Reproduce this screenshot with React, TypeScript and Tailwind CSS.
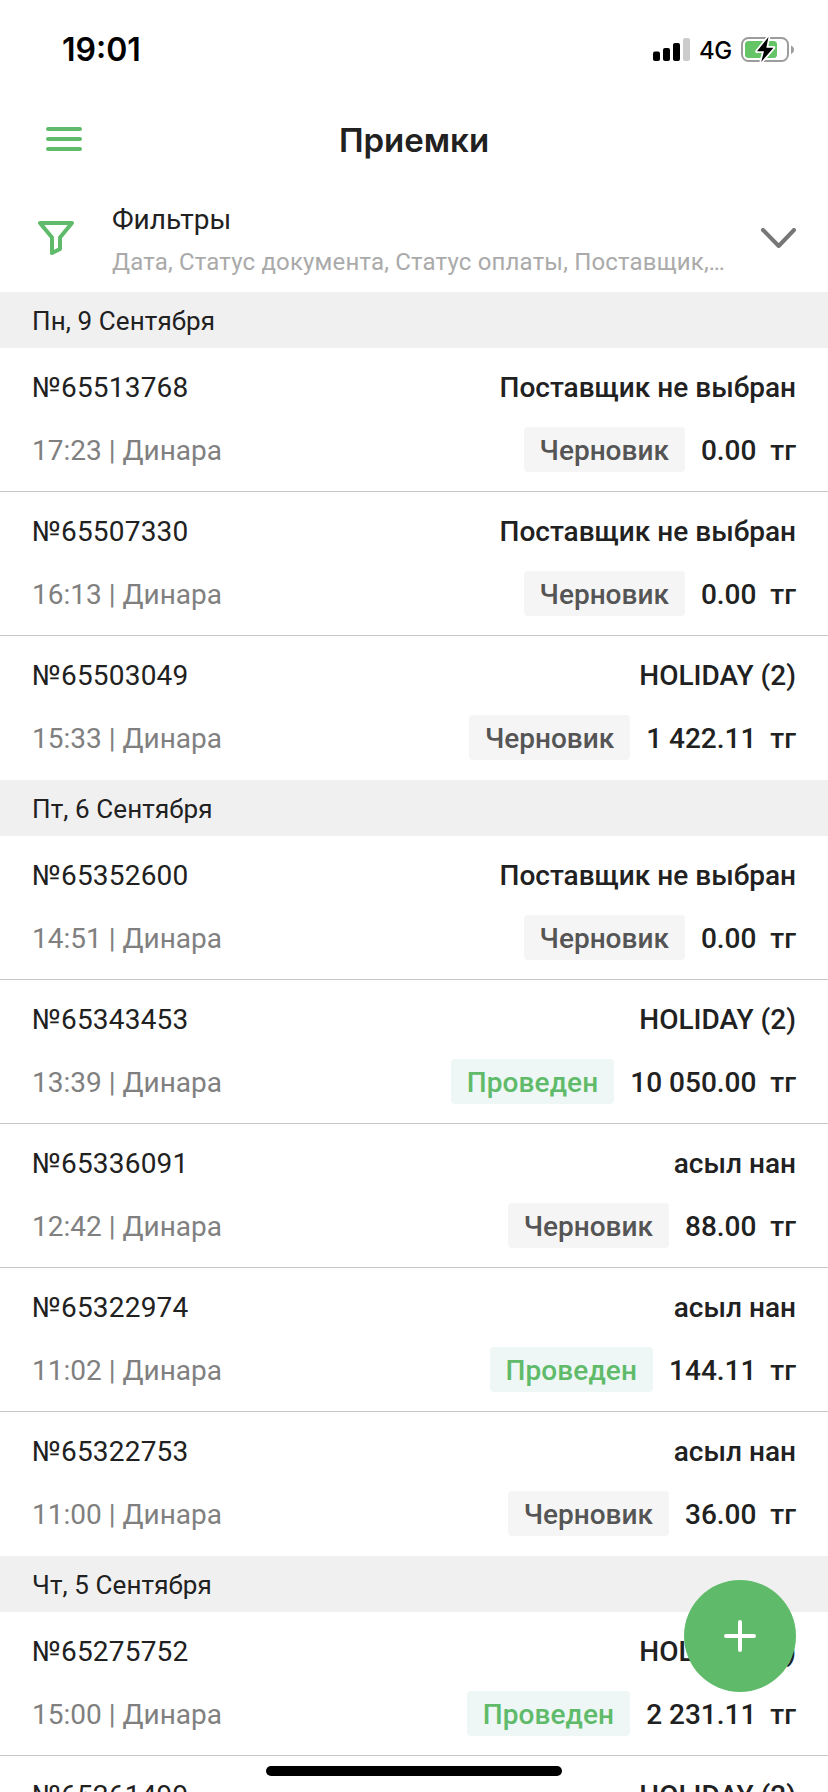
import clsx from 'clsx'

type Status = 'draft' | 'done'

interface Receipt {
  id: string
  time: string
  supplier: string
  status: Status
  amount: string
}

const sections: { date: string; items: Receipt[] }[] = [
  {
    date: 'Пн, 9 Сентября',
    items: [
      { id: '65513768', time: '17:23', supplier: 'Поставщик не выбран', status: 'draft', amount: '0.00' },
      { id: '65507330', time: '16:13', supplier: 'Поставщик не выбран', status: 'draft', amount: '0.00' },
      { id: '65503049', time: '15:33', supplier: 'HOLIDAY (2)', status: 'draft', amount: '1 422.11' },
    ],
  },
  {
    date: 'Пт, 6 Сентября',
    items: [
      { id: '65352600', time: '14:51', supplier: 'Поставщик не выбран', status: 'draft', amount: '0.00' },
      { id: '65343453', time: '13:39', supplier: 'HOLIDAY (2)', status: 'done', amount: '10 050.00' },
      { id: '65336091', time: '12:42', supplier: 'асыл нан', status: 'draft', amount: '88.00' },
      { id: '65322974', time: '11:02', supplier: 'асыл нан', status: 'done', amount: '144.11' },
      { id: '65322753', time: '11:00', supplier: 'асыл нан', status: 'draft', amount: '36.00' },
    ],
  },
  {
    date: 'Чт, 5 Сентября',
    items: [
      { id: '65275752', time: '15:00', supplier: 'HOLIDAY (2)', status: 'done', amount: '2 231.11' },
      { id: '65261499', time: '14:20', supplier: 'HOLIDAY (2)', status: 'done', amount: '1 150.00' },
    ],
  },
]

function StatusBar() {
  return (
    <div className="flex h-[100px] items-center justify-between pr-[33px] pl-[62px] font-['Inter',sans-serif] text-black">
      <span className="text-[32px] leading-10 font-semibold">19:01</span>
      <div className="flex items-center">
        <svg width="38" height="24" viewBox="0 0 38 24">
          <rect x="0" y="13.5" width="7" height="9.5" rx="2" />
          <rect x="10" y="10" width="7" height="13" rx="2" />
          <rect x="20" y="5" width="7" height="18" rx="2" />
          <rect x="30" y="0" width="7" height="23" rx="2" fill="#cccccc" />
        </svg>
        <span className="ml-2 w-[34px] pt-0.5 text-[24px] leading-8 font-medium tracking-[-0.6px] whitespace-nowrap">
          4G
        </span>
        <svg className="ml-2" width="54" height="28" viewBox="0 0 54 28">
          <rect x="1" y="2" width="46" height="23" rx="6.5" fill="none" stroke="#9c9c9c" strokeWidth="2" />
          <path d="M50 9.5c1.8.8 3 2.3 3 4.2s-1.2 3.4-3 4.2z" fill="#9c9c9c" />
          <rect x="4" y="5" width="32" height="17" rx="3.5" fill="#65c466" />
          <path
            d="M27.5 1 16 15.3h7L20.2 26 32.500 11.7h-7.2z"
            stroke="#ffffff"
            strokeWidth="3.5"
            strokeLinejoin="round"
            paintOrder="stroke"
          />
        </svg>
      </div>
    </div>
  )
}

function Header() {
  return (
    <header className="grid h-20 grid-cols-[1fr_auto_1fr] items-center px-[46px]">
      <svg
        className="mb-0.5"
        width="36"
        height="24"
        viewBox="0 0 36 24"
        stroke="#5fbb6a"
        strokeWidth="4"
        strokeLinecap="round"
      >
        <path d="M2 2h32M2 12h32M2 22h32" />
      </svg>
      <h1 className="font-['Inter',sans-serif] text-[33px] leading-10 font-semibold">Приемки</h1>
    </header>
  )
}

function Filters() {
  return (
    <div className="flex h-28 items-center pt-1 pr-8 pl-[38px]">
      <svg
        className="shrink-0"
        width="36"
        height="34"
        viewBox="0 0 36 34"
        fill="none"
        stroke="#5fbb6a"
        strokeWidth="4"
        strokeLinejoin="round"
      >
        <path d="M2 2h32L22 16.5V28l-8 4V16.5z" />
      </svg>
      <div className="ml-[38px] pt-1.5">
        <div className="text-[28px] leading-10">Фильтры</div>
        <div className="mt-0.5 text-[24px] leading-10 tracking-[0.17px] whitespace-nowrap text-[#aaaaaa]">
          Дата, Статус документа, Статус оплаты, Поставщик,<span className="tracking-[-1.4px]">...</span>
        </div>
      </div>
      <svg
        className="ml-auto shrink-0"
        width="36"
        height="20"
        viewBox="0 0 36 20"
        fill="none"
        stroke="#777777"
        strokeWidth="4"
        strokeLinecap="round"
        strokeLinejoin="round"
      >
        <path d="m3 2 15.7 16L34 2" />
      </svg>
    </div>
  )
}

function ReceiptRow({ item }: { item: Receipt }) {
  return (
    <li className="flex h-36 shrink-0 flex-col gap-5 border-b border-[#c7c7c7] px-8 pt-5 text-[28px] last:border-b-0">
      <div className="flex justify-between leading-[39px]">
        <span className="tracking-[0.2px]">№{item.id}</span>
        <span className="font-medium">{item.supplier}</span>
      </div>
      <div className="flex h-[45px] items-start leading-[47px]">
        <span className="text-[#808080]">{item.time} | Динара</span>
        <span
          className={clsx(
            'ml-auto h-[45px] rounded px-4 font-medium',
            item.status === 'done' ? 'bg-[#eef7f6] tracking-[0.1px] text-[#5fbb6a]' : 'bg-[#f5f5f5] text-[#555555]'
          )}
        >
          {item.status === 'done' ? 'Проведен' : 'Черновик'}
        </span>
        <span className="ml-4 font-medium whitespace-pre">{item.amount}  тг</span>
      </div>
    </li>
  )
}

export default function App() {
  return (
    <div className="relative flex h-[1792px] w-[828px] flex-col overflow-hidden bg-white font-['Roboto',sans-serif] text-[#212121]">
      <StatusBar />
      <Header />
      <Filters />

      <main className="flex-1 overflow-hidden">
        {sections.map((section) => (
          <section key={section.date}>
            <h2 className="h-14 bg-[#f0f0f0] px-8 text-[26px] leading-[58px] tracking-[0.1px]">{section.date}</h2>
            <ul>
              {section.items.map((item) => (
                <ReceiptRow key={item.id} item={item} />
              ))}
            </ul>
          </section>
        ))}
      </main>

      {/* Floating add button */}
      <button className="absolute right-8 bottom-[100px] flex size-28 items-center justify-center rounded-full bg-[#5fbb6a]">
        <svg width="32" height="32" viewBox="0 0 32 32" stroke="#ffffff" strokeWidth="4" strokeLinecap="round">
          <path d="M16 2v28M2 16h28" />
        </svg>
      </button>

      {/* Home indicator */}
      <div className="absolute bottom-4 left-[266px] h-2.5 w-[296px] rounded-full bg-black" />
    </div>
  )
}
